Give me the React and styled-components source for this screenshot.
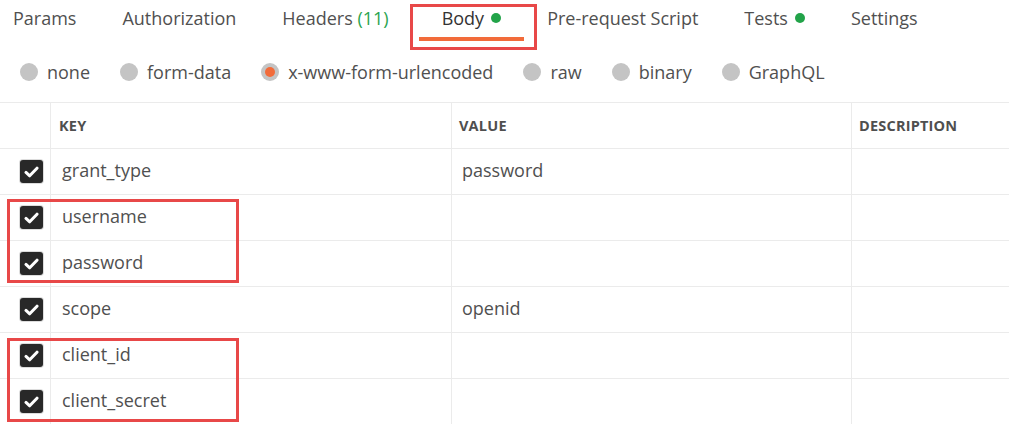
import React from 'react'
import styled, { createGlobalStyle } from 'styled-components'

const GlobalStyle = createGlobalStyle`
  body {
    margin: 0;
    background: #fff;
    font-family: "Open Sans", "Noto Sans", sans-serif;
    color: #505050;
  }
`

const Page = styled.div`
  width: 1009px;
  height: 424px;
  overflow: hidden;
`

const TabBar = styled.div`
  display: flex;
  margin-left: -10px;
  height: 41px;
`

const Tab = styled.div`
  position: relative;
  display: flex;
  align-items: flex-start;
  gap: 7px;
  padding: 6px 23px 0 23px;
  margin-left: ${p => (p.$active ? 7 : 0)}px;
  height: 41px;
  box-sizing: border-box;
  font-size: 18px;
  line-height: 24px;
  white-space: nowrap;
  color: ${p => (p.$active ? '#333' : '#505050')};
  border-bottom: 4px solid ${p => (p.$active ? '#f26b3a' : 'transparent')};
`

const Count = styled.span`
  color: #2aa44f;
`

const Dot = styled.span`
  width: 10px;
  height: 10px;
  border-radius: 50%;
  background: #22a349;
  margin-top: 7px;
`

const Highlight = styled.div`
  position: absolute;
  border: 3px solid #e84848;
  box-sizing: border-box;
  pointer-events: none;
  top: ${p => p.$top}px;
  left: ${p => p.$left}px;
  width: ${p => p.$w}px;
  height: ${p => p.$h}px;
`

const RadioRow = styled.div`
  display: flex;
  align-items: center;
  gap: 30px;
  height: 61px;
  padding-left: 20px;
`

const RadioItem = styled.label`
  display: flex;
  align-items: center;
  gap: 9px;
  font-size: 18px;
  color: #505050;
`

const RadioCircle = styled.span`
  width: 18px;
  height: 18px;
  border-radius: 50%;
  background: #c4c4c4;
  display: flex;
  align-items: center;
  justify-content: center;
  &::after {
    content: '';
    width: 10px;
    height: 10px;
    border-radius: 50%;
    background: ${p => (p.$checked ? '#f26b3a' : 'transparent')};
  }
`

const Table = styled.div`
  border-top: 1px solid #ebebeb;
`

const Row = styled.div`
  display: grid;
  grid-template-columns: 51px 401px 400px 1fr;
  height: 46px;
  border-bottom: 1px solid #ebebeb;
  box-sizing: border-box;
`

const Group = styled.div`
  position: relative;
`

const Cell = styled.div`
  display: flex;
  align-items: center;
  padding-left: ${p => p.$pad || 10}px;
  padding-bottom: ${p => p.$lift || 0}px;
  border-right: 1px solid #ebebeb;
  font-size: 18px;
  color: #505050;
  white-space: nowrap;
  &:last-child {
    border-right: none;
  }
`

const HeadCell = styled(Cell)`
  font-size: 14.5px;
  font-weight: 700;
  letter-spacing: 0.2px;
  color: #4f4f4f;
`

const Box = styled.span`
  width: 23px;
  height: 23px;
  border-radius: 3px;
  background: #282828;
  box-shadow: 0 0 0 1px #dcdcdc;
  display: flex;
  align-items: center;
  justify-content: center;
`

const Check = () => (
  <Box>
    <svg width="15" height="12" viewBox="0 0 15 12">
      <path d="M2 6.4 L5.7 9.8 L13 2.2" fill="none" stroke="#fff" strokeWidth="3" strokeLinecap="round" strokeLinejoin="round" />
    </svg>
  </Box>
)

const tabs = [
  { label: 'Params' },
  { label: 'Authorization' },
  { label: 'Headers', count: '(11)' },
  { label: 'Body', dot: true, active: true },
  { label: 'Pre-request Script' },
  { label: 'Tests', dot: true },
  { label: 'Settings' },
]

const radios = ['none', 'form-data', 'x-www-form-urlencoded', 'raw', 'binary', 'GraphQL']

const DataRow = ({ k, v }) => (
  <Row>
    <Cell $pad={20}><Check /></Cell>
    <Cell $pad={11} $lift={3}>{k}</Cell>
    <Cell $pad={10} $lift={3}>{v}</Cell>
    <Cell />
  </Row>
)

export default function App() {
  return (
    <Page>
      <GlobalStyle />
      <TabBar>
        {tabs.map(t => (
          <Tab key={t.label} $active={t.active}>
            <span>
              {t.label}
              {t.count && <> <Count>{t.count}</Count></>}
            </span>
            {t.dot && <Dot />}
            {t.active && <Highlight $top={4} $left={-9} $w={127} $h={46} />}
          </Tab>
        ))}
      </TabBar>
      <RadioRow>
        {radios.map(r => (
          <RadioItem key={r}>
            <RadioCircle $checked={r === 'x-www-form-urlencoded'} />
            {r}
          </RadioItem>
        ))}
      </RadioRow>
      <Table>
        <Row>
          <Cell />
          <HeadCell $pad={8}>KEY</HeadCell>
          <HeadCell $pad={7}>VALUE</HeadCell>
          <HeadCell $pad={7}>DESCRIPTION</HeadCell>
        </Row>
        <DataRow k="grant_type" v="password" />
        <Group>
          <DataRow k="username" />
          <DataRow k="password" />
          <Highlight $top={4} $left={7} $w={232} $h={84} />
        </Group>
        <DataRow k="scope" v="openid" />
        <Group>
          <DataRow k="client_id" />
          <DataRow k="client_secret" />
          <Highlight $top={5} $left={7} $w={232} $h={84} />
        </Group>
      </Table>
    </Page>
  )
}
